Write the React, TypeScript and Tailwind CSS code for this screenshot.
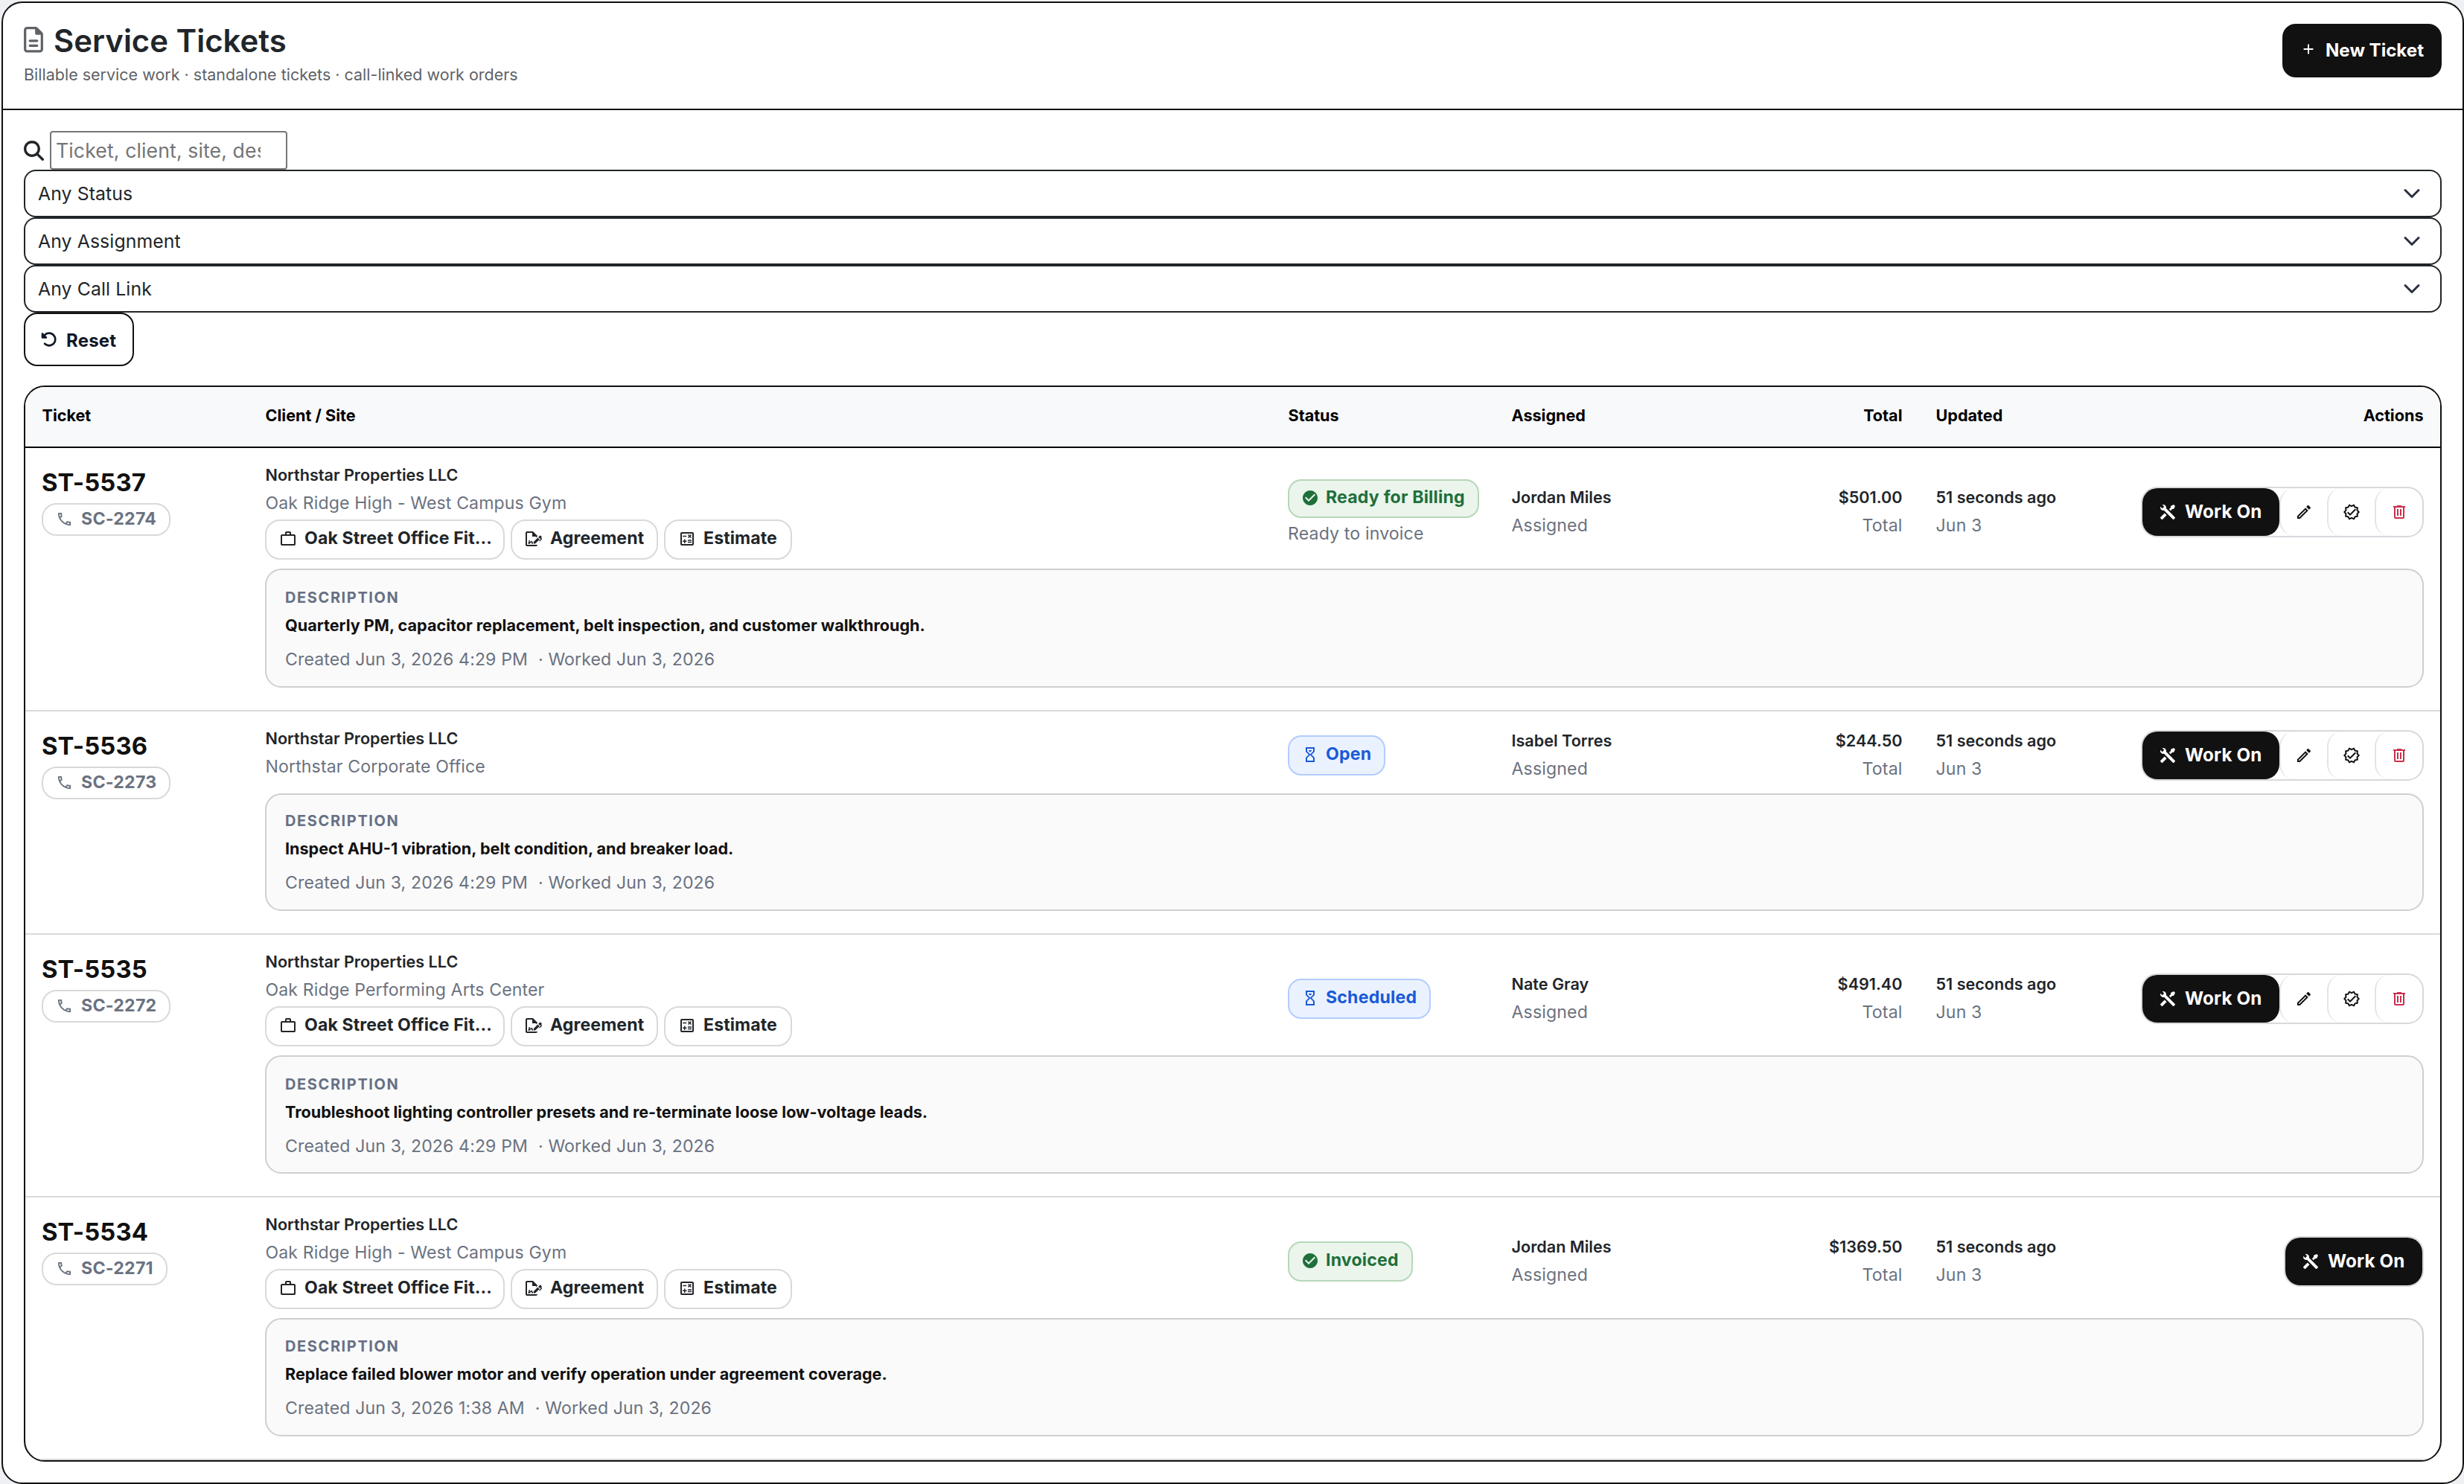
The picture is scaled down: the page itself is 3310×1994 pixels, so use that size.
import type { ReactNode } from "react";
import { FaMagnifyingGlass, FaRegFileLines, FaRotateLeft } from "react-icons/fa6";

const icons = {
  plus: "M19,13H13V19H11V13H5V11H11V5H13V11H19V13Z",
  phone:
    "M20,15.5C18.8,15.5 17.5,15.3 16.4,14.9C16.3,14.9 16.2,14.9 16.1,14.9C15.8,14.9 15.6,15 15.4,15.2L13.2,17.4C10.4,15.9 8,13.6 6.6,10.8L8.8,8.6C9.1,8.3 9.2,7.9 9,7.6C8.7,6.5 8.5,5.2 8.5,4C8.5,3.5 8,3 7.5,3H4C3.5,3 3,3.5 3,4C3,13.4 10.6,21 20,21C20.5,21 21,20.5 21,20V16.5C21,16 20.5,15.5 20,15.5M5,5H6.5C6.6,5.9 6.8,6.8 7,7.6L5.8,8.8C5.4,7.6 5.1,6.3 5,5M19,19C17.7,18.9 16.4,18.6 15.2,18.2L16.4,17C17.2,17.2 18.1,17.4 19,17.4V19Z",
  briefcase:
    "M20,6C20.58,6 21.05,6.2 21.42,6.59C21.8,7 22,7.45 22,8V19C22,19.55 21.8,20 21.42,20.41C21.05,20.8 20.58,21 20,21H4C3.42,21 2.95,20.8 2.58,20.41C2.2,20 2,19.55 2,19V8C2,7.45 2.2,7 2.58,6.59C2.95,6.2 3.42,6 4,6H8V4C8,3.42 8.2,2.95 8.58,2.58C8.95,2.2 9.42,2 10,2H14C14.58,2 15.05,2.2 15.42,2.58C15.8,2.95 16,3.42 16,4V6H20M4,8V19H20V8H4M14,6V4H10V6H14Z",
  fileSign:
    "M19.7 12.9L14 18.6H11.7V16.3L17.4 10.6L19.7 12.9M23.1 12.1C23.1 12.4 22.8 12.7 22.5 13L20 15.5L19.1 14.6L21.7 12L21.1 11.4L20.4 12.1L18.1 9.8L20.3 7.7C20.5 7.5 20.9 7.5 21.2 7.7L22.6 9.1C22.8 9.3 22.8 9.7 22.6 10C22.4 10.2 22.2 10.4 22.2 10.6C22.2 10.8 22.4 11 22.6 11.2C22.9 11.5 23.2 11.8 23.1 12.1M3 20V4H10V9H15V10.5L17 8.5V8L11 2H3C1.9 2 1 2.9 1 4V20C1 21.1 1.9 22 3 22H15C16.1 22 17 21.1 17 20H3M11 17.1C10.8 17.1 10.6 17.2 10.5 17.2L10 15H8.5L6.4 16.7L7 14H5.5L4.5 19H6L8.9 16.4L9.5 18.7H10.5L11 18.6V17.1Z",
  calculator:
    "M19,3H5C3.9,3 3,3.9 3,5V19C3,20.1 3.9,21 5,21H19C20.1,21 21,20.1 21,19V5C21,3.9 20.1,3 19,3M19,19H5V5H19V19M6.2,7.7H11.2V9.2H6.2V7.7M13,15.8H18V17.3H13V15.8M13,13.2H18V14.7H13V13.2M8,18H9.5V16H11.5V14.5H9.5V12.5H8V14.5H6V16H8V18M14.1,10.9L15.5,9.5L16.9,10.9L18,9.9L16.6,8.5L18,7.1L16.9,6L15.5,7.4L14.1,6L13,7.1L14.4,8.5L13,9.9L14.1,10.9Z",
  checkCircle:
    "M12 2C6.5 2 2 6.5 2 12S6.5 22 12 22 22 17.5 22 12 17.5 2 12 2M10 17L5 12L6.41 10.59L10 14.17L17.59 6.58L19 8L10 17Z",
  hourglass:
    "M6,2H18V8H18V8L14,12L18,16V16H18V22H6V16H6V16L10,12L6,8V8H6V2M16,16.5L12,12.5L8,16.5V20H16V16.5M12,11.5L16,7.5V4H8V7.5L12,11.5M10,6H14V6.75L12,8.75L10,6.75V6Z",
  tools:
    "M21.71 20.29L20.29 21.71A1 1 0 0 1 18.88 21.71L7 9.85A3.81 3.81 0 0 1 6 10A4 4 0 0 1 2.22 4.7L4.76 7.24L5.29 6.71L6.71 5.29L7.24 4.76L4.7 2.22A4 4 0 0 1 10 6A3.81 3.81 0 0 1 9.85 7L21.71 18.88A1 1 0 0 1 21.71 20.29M2.29 18.88A1 1 0 0 0 2.29 20.29L3.71 21.71A1 1 0 0 0 5.12 21.71L10.59 16.25L7.76 13.42M20 2L16 4V6L13.83 8.17L15.83 10.17L18 8H20L22 4Z",
  pencil:
    "M14.06,9L15,9.94L5.92,19H5V18.08L14.06,9M17.66,3C17.41,3 17.15,3.1 16.96,3.29L15.13,5.12L18.88,8.87L20.71,7.04C21.1,6.65 21.1,6 20.71,5.63L18.37,3.29C18.17,3.09 17.92,3 17.66,3M14.06,6.19L3,17.25V21H6.75L17.81,9.94L14.06,6.19Z",
  decagram:
    "M23 12L20.56 14.78L20.9 18.46L17.29 19.28L15.4 22.46L12 21L8.6 22.47L6.71 19.29L3.1 18.47L3.44 14.78L1 12L3.44 9.21L3.1 5.53L6.71 4.72L8.6 1.54L12 3L15.4 1.54L17.29 4.72L20.9 5.54L20.56 9.22L23 12M20.33 12L18.5 9.89L18.74 7.1L16 6.5L14.58 4.07L12 5.18L9.42 4.07L8 6.5L5.26 7.09L5.5 9.88L3.67 12L5.5 14.1L5.26 16.9L8 17.5L9.42 19.93L12 18.81L14.58 19.92L16 17.5L18.74 16.89L18.5 14.1L20.33 12M10 17L6 13L7.41 11.59L10 14.17L16.59 7.58L18 9",
  trash:
    "M9,3V4H4V6H5V19A2,2 0 0,0 7,21H17A2,2 0 0,0 19,19V6H20V4H15V3H9M7,6H17V19H7V6M9,8V17H11V8H9M13,8V17H15V8H13Z",
};

function Icon({ name, size = 24 }: { name: keyof typeof icons; size?: number }) {
  return (
    <svg width={size} height={size} viewBox="0 0 24 24" fill="currentColor" className="shrink-0">
      <path d={icons[name]} />
    </svg>
  );
}

type Ticket = {
  id: string;
  call: string;
  site: string;
  linked: boolean;
  status: string;
  tone: "green" | "blue";
  note?: string;
  tech: string;
  total: string;
  description: string;
  created: string;
  editable: boolean;
  height: string;
  boxPadding: string;
};

const tickets: Ticket[] = [
  {
    id: "ST-5537",
    call: "SC-2274",
    site: "Oak Ridge High - West Campus Gym",
    linked: true,
    status: "Ready for Billing",
    tone: "green",
    note: "Ready to invoice",
    tech: "Jordan Miles",
    total: "$501.00",
    description: "Quarterly PM, capacitor replacement, belt inspection, and customer walkthrough.",
    created: "Jun 3, 2026 4:29 PM",
    editable: true,
    height: "h-[354px]",
    boxPadding: "pt-[22px]",
  },
  {
    id: "ST-5536",
    call: "SC-2273",
    site: "Northstar Corporate Office",
    linked: false,
    status: "Open",
    tone: "blue",
    tech: "Isabel Torres",
    total: "$244.50",
    description: "Inspect AHU-1 vibration, belt condition, and breaker load.",
    created: "Jun 3, 2026 4:29 PM",
    editable: true,
    height: "h-[300px]",
    boxPadding: "pt-5",
  },
  {
    id: "ST-5535",
    call: "SC-2272",
    site: "Oak Ridge Performing Arts Center",
    linked: true,
    status: "Scheduled",
    tone: "blue",
    tech: "Nate Gray",
    total: "$491.40",
    description: "Troubleshoot lighting controller presets and re-terminate loose low-voltage leads.",
    created: "Jun 3, 2026 4:29 PM",
    editable: true,
    height: "h-[353px]",
    boxPadding: "pt-[22px]",
  },
  {
    id: "ST-5534",
    call: "SC-2271",
    site: "Oak Ridge High - West Campus Gym",
    linked: true,
    status: "Invoiced",
    tone: "green",
    tech: "Jordan Miles",
    total: "$1369.50",
    description: "Replace failed blower motor and verify operation under agreement coverage.",
    created: "Jun 3, 2026 1:38 AM",
    editable: false,
    height: "h-[353px]",
    boxPadding: "pt-[21px]",
  },
];

const columns = "grid grid-cols-[300px_1fr_300px_300px_270px_262px_438px]";

function FilterSelect({ label }: { label: string }) {
  return (
    <div className="flex h-16 items-center justify-between rounded-2xl border-2 border-[#212529] bg-white pl-[17px] pr-[26px] text-[24.8px] tracking-[0.1px] text-[#212529]">
      <span className="pt-[2px]">{label}</span>
      <svg width="24" height="24" viewBox="0 0 16 16" fill="none" stroke="#2b3040" strokeWidth="2" strokeLinecap="round" strokeLinejoin="round">
        <path d="m2 5 6 6 6-6" />
      </svg>
    </div>
  );
}

function Chip({ icon, width, children }: { icon: keyof typeof icons; width: string; children: ReactNode }) {
  return (
    <div className={`${width} flex h-[54px] items-center gap-[10px] rounded-[20px] border-2 border-[#d9d9d9] bg-white pb-[3px] pl-[17px] text-[23.1px] font-bold tracking-[0.1px] text-[#212529]`}>
      <Icon name={icon} />
      <span className="whitespace-nowrap">{children}</span>
    </div>
  );
}

function TwoLine({ top, bottom, className = "" }: { top: string; bottom: string; className?: string }) {
  return (
    <div className={`self-center px-[22.5px] ${className}`}>
      <div className="text-[21.6px] font-semibold leading-[36px] text-[#212529]">{top}</div>
      <div className="text-[23.1px] leading-[40px] tracking-[0.15px] text-[#6b7280]">{bottom}</div>
    </div>
  );
}

function StatusCell({ status, tone, note }: Pick<Ticket, "status" | "tone" | "note">) {
  const color = tone === "green" ? "border-[#b7d7b9] bg-[#ebf5ec] text-[#1f6f3a]" : "border-[#b3ccff] bg-[#ebf2ff] text-[#1a5ad7]";
  return (
    <div className={`self-center pl-[22px] ${note ? "pt-[4px]" : ""}`}>
      <div className={`${color} ${note ? "h-[52px]" : "h-[54px]"} flex w-fit items-center gap-[9px] whitespace-nowrap rounded-[18px] border-2 pb-[3px] pl-4 pr-[17px] text-[23.1px] font-bold tracking-[0.2px]`}>
        <Icon name={tone === "green" ? "checkCircle" : "hourglass"} />
        <span>{status}</span>
      </div>
      {note && <div className="mt-[2px] text-[23.1px] leading-[38px] tracking-[0.15px] text-[#6b7280]">{note}</div>}
    </div>
  );
}

function Actions({ editable }: { editable: boolean }) {
  const button = "flex w-16 items-center justify-center rounded-[20px] border-l-2 border-[#e3e4e8]";
  return (
    <div className="mr-[22px] flex h-[68px] self-center justify-self-end rounded-[22px] border-2 border-[#d8d8dd] bg-white text-[#111111]">
      <button className="flex w-[184px] items-center gap-[11px] rounded-[20px] bg-[#111111] pl-[22px] text-[24.2px] font-bold tracking-[0.15px] text-white">
        <Icon name="tools" />
        <span>Work On</span>
      </button>
      {editable && (
        <>
          <button className={button}><Icon name="pencil" /></button>
          <button className={button}><Icon name="decagram" /></button>
          <button className={`${button} text-[#c9304e]`}><Icon name="trash" /></button>
        </>
      )}
    </div>
  );
}

function TicketRow({ ticket }: { ticket: Ticket }) {
  return (
    <div className={`${ticket.height} flex flex-col border-b-2 border-[#d9d9d9] pb-[30px]`}>
      <div className={`${columns} shrink-0 ${ticket.linked ? "h-[162px]" : "h-[110px]"}`}>
        <div className="px-[22px] pt-[25px]">
          <div className="text-[32.8px] font-bold leading-[42px] tracking-[0.1px] text-[#111111]">{ticket.id}</div>
          <div className="mt-[7px] flex h-11 w-fit items-center gap-[11px] rounded-[20px] border-2 border-[#d9d9d9] pb-px pl-[17px] pr-[17px] text-[23.2px] font-bold tracking-[0.2px] text-[#6b7280]">
            <Icon name="phone" size={23} />
            <span>{ticket.call}</span>
          </div>
        </div>
        <div className="px-[22px] pt-5">
          <div className="pl-[0.5px] text-[21.6px] font-semibold leading-[33px] text-[#212529]">Northstar Properties LLC</div>
          <div className="pl-[0.5px] text-[23.1px] leading-[42px] tracking-[0.12px] text-[#6b7280]">{ticket.site}</div>
          {ticket.linked && (
            <div className="mt-px flex gap-2">
              <Chip icon="briefcase" width="w-[322px]">Oak Street Office Fit…</Chip>
              <Chip icon="fileSign" width="w-[198px]">Agreement</Chip>
              <Chip icon="calculator" width="w-[172px]">Estimate</Chip>
            </div>
          )}
        </div>
        <div className={`col-span-5 grid grid-cols-subgrid ${ticket.linked ? "h-[172px]" : "h-[118px]"}`}>
          <StatusCell status={ticket.status} tone={ticket.tone} note={ticket.note} />
          <TwoLine top={ticket.tech} bottom="Assigned" />
          <TwoLine top={ticket.total} bottom="Total" className="text-right" />
          <TwoLine top="51 seconds ago" bottom="Jun 3" />
          <Actions editable={ticket.editable} />
        </div>
      </div>
      <div className={`${ticket.boxPadding} ml-[322px] mr-[22px] flex-1 rounded-[22px] border-2 border-[#cfcfcf] bg-[#fafafa] pl-[25px]`}>
        <div className="text-[20px] font-bold leading-[30px] tracking-[1.6px] text-[#667085]">DESCRIPTION</div>
        <div className="text-[21.6px] font-bold leading-[45px] text-[#111111]">{ticket.description}</div>
        <div className="text-[23.1px] leading-[46px] tracking-[0.12px] text-[#6b7280]">
          <span>Created {ticket.created}</span>
          <span className="ml-[14px]">· Worked Jun 3, 2026</span>
        </div>
      </div>
    </div>
  );
}

export default function App() {
  return (
    <div className="h-[1994px] w-[3310px] bg-[#eff0f3] pl-[2px] pt-[2px] font-['Inter',sans-serif]">
      <main className="h-[1992px] rounded-[28px] border-2 border-[#111111] bg-white">
        <header className="flex h-36 items-start justify-between border-b-2 border-[#111111] px-7 pt-7">
          <div>
            <h1 className="flex items-center gap-[14px] text-[41.9px] font-semibold leading-[46px] text-[#212529]">
              <FaRegFileLines className="mb-[3px] h-[34.5px] w-[26px] text-[#5f6368]" />
              <span>Service Tickets</span>
            </h1>
            <p className="mt-[6px] text-[21.5px] leading-[33px] text-[#5f6368]">
              Billable service work · standalone tickets · call-linked work orders
            </p>
          </div>
          <button className="flex h-[72px] w-[214px] items-center gap-3 rounded-[18px] bg-[#111111] pl-6 text-[24.1px] font-bold text-white">
            <span className="pb-1"><Icon name="plus" size={22} /></span>
            <span>New Ticket</span>
          </button>
        </header>

        <div className="p-7">
          <div className="flex items-center gap-2">
            <FaMagnifyingGlass className="size-[27px] text-[#212529]" />
            <div className="h-[52px] w-[319px] rounded-[4px] border-2 border-[#767676] bg-white pl-[6px] text-[26.67px] leading-[49px] tracking-[0.1px] text-[#757575]">
              <div className="w-[275px] overflow-hidden whitespace-nowrap">Ticket, client, site, description</div>
            </div>
          </div>
          <FilterSelect label="Any Status" />
          <FilterSelect label="Any Assignment" />
          <FilterSelect label="Any Call Link" />
          <button className="flex h-[72px] w-[148px] items-center gap-3 rounded-[18px] border-2 border-[#111111] pl-[21px] text-[24px] font-bold tracking-[0.2px] text-[#111827]">
            <FaRotateLeft className="size-[22px]" />
            <span className="pt-[3px]">Reset</span>
          </button>

          <section className="mt-[26px] overflow-hidden rounded-[28px] border-2 border-[#111111]">
            <div className={`${columns} h-[82px] items-center border-b-2 border-black bg-[#f8f9fb] pb-[3px] text-[21.6px] font-bold text-black`}>
              <div className="px-[22.5px]">Ticket</div>
              <div className="px-[22.5px]">Client / Site</div>
              <div className="px-[22.5px]">Status</div>
              <div className="px-[22.5px]">Assigned</div>
              <div className="px-[22.5px] text-right">Total</div>
              <div className="px-[22.5px]">Updated</div>
              <div className="px-[22.5px] text-right">Actions</div>
            </div>
            {tickets.map((ticket) => (
              <TicketRow key={ticket.id} ticket={ticket} />
            ))}
          </section>
        </div>
      </main>
    </div>
  );
}
